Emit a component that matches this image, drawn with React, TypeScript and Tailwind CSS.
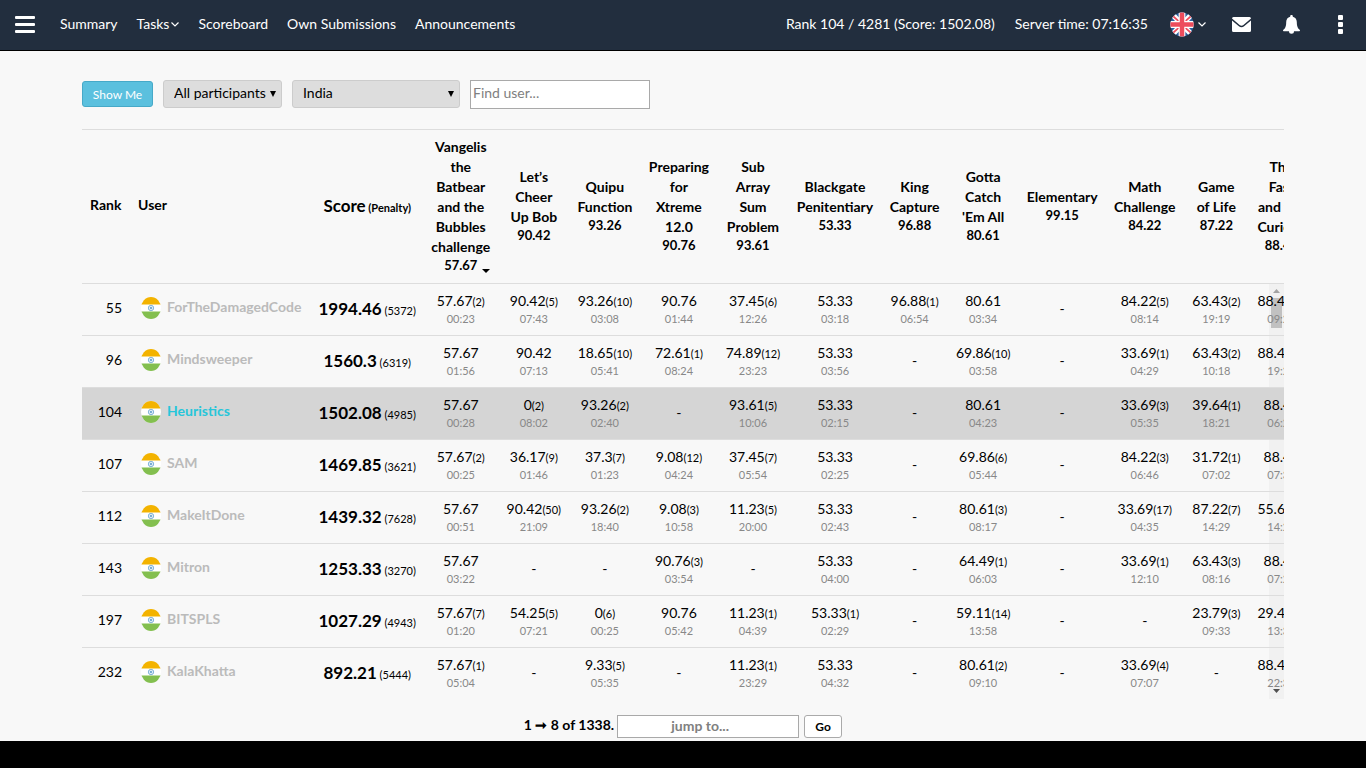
import { Fragment } from "react";

type Cell = [string, string?, string?] | null;
type Row = { rank: number; user: string; score: string; penalty: string; cells: Cell[]; me?: boolean };

const problems: { lines: string[]; best: string; width: string }[] = [
  { lines: ["Vangelis", "the", "Batbear", "and the", "Bubbles", "challenge"], best: "57.67", width: "w-[75px]" },
  { lines: ["Let’s", "Cheer", "Up Bob"], best: "90.42", width: "w-[71px]" },
  { lines: ["Quipu", "Function"], best: "93.26", width: "w-[71px]" },
  { lines: ["Preparing", "for", "Xtreme", "12.0"], best: "90.76", width: "w-[77px]" },
  { lines: ["Sub", "Array", "Sum", "Problem"], best: "93.61", width: "w-[71px]" },
  { lines: ["Blackgate", "Penitentiary"], best: "53.33", width: "w-[93px]" },
  { lines: ["King", "Capture"], best: "96.88", width: "w-[66px]" },
  { lines: ["Gotta", "Catch", "'Em All"], best: "80.61", width: "w-[71px]" },
  { lines: ["Elementary"], best: "99.15", width: "w-[87px]" },
  { lines: ["Math", "Challenge"], best: "84.22", width: "w-[78px]" },
  { lines: ["Game", "of Life"], best: "87.22", width: "w-[65px]" },
  { lines: ["The", "Fast", "and the", "Curious"], best: "88.42", width: "w-[65px]" },
];

const rows: Row[] = [
  { rank: 55, user: "ForTheDamagedCode", score: "1994.46", penalty: "5372", cells: [["57.67", "00:23", "2"], ["90.42", "07:43", "5"], ["93.26", "03:08", "10"], ["90.76", "01:44"], ["37.45", "12:26", "6"], ["53.33", "03:18"], ["96.88", "06:54", "1"], ["80.61", "03:34"], null, ["84.22", "08:14", "5"], ["63.43", "19:19", "2"], ["88.42", "09:24", "2"]] },
  { rank: 96, user: "Mindsweeper", score: "1560.3", penalty: "6319", cells: [["57.67", "01:56"], ["90.42", "07:13"], ["18.65", "05:41", "10"], ["72.61", "08:24", "1"], ["74.89", "23:23", "12"], ["53.33", "03:56"], null, ["69.86", "03:58", "10"], null, ["33.69", "04:29", "1"], ["63.43", "10:18", "2"], ["88.42", "19:24", "1"]] },
  { rank: 104, user: "Heuristics", score: "1502.08", penalty: "4985", me: true, cells: [["57.67", "00:28"], ["0", "08:02", "2"], ["93.26", "02:40", "2"], null, ["93.61", "10:06", "5"], ["53.33", "02:15"], null, ["80.61", "04:23"], null, ["33.69", "05:35", "3"], ["39.64", "18:21", "1"], ["88.42", "06:24"]] },
  { rank: 107, user: "SAM", score: "1469.85", penalty: "3621", cells: [["57.67", "00:25", "2"], ["36.17", "01:46", "9"], ["37.3", "01:23", "7"], ["9.08", "04:24", "12"], ["37.45", "05:54", "7"], ["53.33", "02:25"], null, ["69.86", "05:44", "6"], null, ["84.22", "06:46", "3"], ["31.72", "07:02", "1"], ["88.42", "07:34"]] },
  { rank: 112, user: "MakeItDone", score: "1439.32", penalty: "7628", cells: [["57.67", "00:51"], ["90.42", "21:09", "50"], ["93.26", "18:40", "2"], ["9.08", "10:58", "3"], ["11.23", "20:00", "5"], ["53.33", "02:43"], null, ["80.61", "08:17", "3"], null, ["33.69", "04:35", "17"], ["87.22", "14:29", "7"], ["55.65", "14:24", "3"]] },
  { rank: 143, user: "Mitron", score: "1253.33", penalty: "3270", cells: [["57.67", "03:22"], null, null, ["90.76", "03:54", "3"], null, ["53.33", "04:00"], null, ["64.49", "06:03", "1"], null, ["33.69", "12:10", "1"], ["63.43", "08:16", "3"], ["88.42", "07:24"]] },
  { rank: 197, user: "BITSPLS", score: "1027.29", penalty: "4943", cells: [["57.67", "01:20", "7"], ["54.25", "07:21", "5"], ["0", "00:25", "6"], ["90.76", "05:42"], ["11.23", "04:39", "1"], ["53.33", "02:29", "1"], null, ["59.11", "13:58", "14"], null, null, ["23.79", "09:33", "3"], ["29.47", "13:34", "2"]] },
  { rank: 232, user: "KalaKhatta", score: "892.21", penalty: "5444", cells: [["57.67", "05:04", "1"], null, ["9.33", "05:35", "5"], null, ["11.23", "23:29", "1"], ["53.33", "04:32"], null, ["80.61", "09:10", "2"], null, ["33.69", "07:07", "4"], null, ["88.42", "22:34", "2"]] },
];

function Chevron() {
  return (
    <svg className="h-2 w-2" viewBox="0 0 8 8" fill="none" stroke="currentColor" strokeWidth="1.2" aria-hidden="true">
      <path d="M.5 2.5 4 6l3.5-3.5" />
    </svg>
  );
}

function IndiaFlag() {
  return (
    <svg className="h-[22px] w-5 shrink-0" viewBox="0 0 20 22" preserveAspectRatio="none" aria-label="India" role="img">
      <defs>
        <clipPath id="in"><ellipse cx="10" cy="11" rx="10" ry="11" /></clipPath>
      </defs>
      <g clipPath="url(#in)">
        <rect width="20" height="22" fill="#fff" />
        <rect width="20" height="7.5" fill="#f3b300" />
        <rect y="14.5" width="20" height="8" fill="#83bf4f" />
      </g>
      <circle cx="10" cy="11" r="2.7" fill="#dcebf5" stroke="#6aa5d0" strokeWidth=".8" />
      <circle cx="10" cy="11" r=".9" fill="#4b8fc4" />
    </svg>
  );
}

function UkFlag() {
  return (
    <svg className="h-[25px] w-6" viewBox="0 0 64 64" preserveAspectRatio="none" aria-hidden="true">
      <defs>
        <clipPath id="uk"><circle cx="32" cy="32" r="31" /></clipPath>
      </defs>
      <g clipPath="url(#uk)">
        <rect width="64" height="64" fill="#2a5f9e" />
        <path d="M0 0l64 64M64 0 0 64" stroke="#fff" strokeWidth="14" />
        <path d="M4 7 28 28M60 7 36 28M4 57l24-21M60 57 36 36" stroke="#ed4c5c" strokeWidth="4.5" />
        <path d="M32 0v64M0 32h64" stroke="#fff" strokeWidth="18" />
        <path d="M32 0v64M0 32h64" stroke="#ed4c5c" strokeWidth="12" />
      </g>
    </svg>
  );
}

function TopBar() {
  return (
    <header className="flex h-[51px] items-center justify-between border-b border-black bg-[#222e3e] px-[15px] pb-[2px] text-sm text-white">
      <nav className="flex items-center gap-[19px]">
        <button aria-label="Menu" className="mr-[6px] flex w-5 flex-col gap-1">
          <span className="h-[3px] rounded-[1px] bg-white" />
          <span className="h-[3px] rounded-[1px] bg-white" />
          <span className="h-[3px] rounded-[1px] bg-white" />
        </button>
        <a href="#summary">Summary</a>
        <a href="#tasks" className="flex items-center gap-[2px]">Tasks<Chevron /></a>
        <a href="#scoreboard">Scoreboard</a>
        <a href="#own">Own Submissions</a>
        <a href="#announcements">Announcements</a>
      </nav>
      <div className="flex items-center">
        <span>Rank 104 / 4281 (Score: 1502.08)</span>
        <span className="ml-5">Server time: 07:16:35</span>
        <button aria-label="Language" className="ml-[22px] flex items-center gap-1"><UkFlag /><Chevron /></button>
        <button aria-label="Messages" className="ml-[26px]">
          <svg className="h-[15px] w-[19px]" viewBox="0 0 19 15" aria-hidden="true">
            <path fill="#fff" d="M1.5 0h16A1.5 1.5 0 0 1 19 1.5L11.4 8a3 3 0 0 1-3.8 0L0 1.5A1.5 1.5 0 0 1 1.5 0ZM0 3.4 6.6 9a4.5 4.5 0 0 0 5.8 0L19 3.4v10.1a1.5 1.5 0 0 1-1.5 1.5h-16A1.5 1.5 0 0 1 0 13.5Z" />
          </svg>
        </button>
        <button aria-label="Notifications" className="ml-8">
          <svg className="h-[19px] w-[17px]" viewBox="0 0 17 19" aria-hidden="true">
            <path fill="#fff" d="M8.5 0c.8 0 1.3.5 1.3 1.3v.4c2.5.6 4 2.600 4 5.300 0 4.500 1 6.300 3 8 .4.400.2 1.200-.5 1.200h-5.300a2.500 2.500 0 0 1-5 0H.7c-.7 0-.9-.8-.5-1.200 2-1.700 3-3.500 3-8 0-2.700 1.500-4.700 4-5.300v-.4C7.200.5 7.700 0 8.500 0Z" />
          </svg>
        </button>
        <button aria-label="More" className="ml-[38px] mr-2 flex flex-col gap-[2px]">
          <span className="size-[5px] rounded-[1px] bg-white" />
          <span className="size-[5px] rounded-[1px] bg-white" />
          <span className="size-[5px] rounded-[1px] bg-white" />
        </button>
      </div>
    </header>
  );
}

function Select({ label, value, width }: { label: string; value: string; width: string }) {
  return (
    <div className={`grid items-center ${width}`}>
      <select aria-label={label} className="col-start-1 row-start-1 h-7 appearance-none rounded-[3px] border border-[#ccc] bg-[#ddd] pb-[3px] pl-[10px] text-sm">
        <option>{value}</option>
      </select>
      <svg className="pointer-events-none col-start-1 row-start-1 mr-[6px] h-[6px] w-[6px] justify-self-end" viewBox="0 0 6 6" aria-hidden="true">
        <path d="M0 0h6L3 6Z" />
      </svg>
    </div>
  );
}

function Filters() {
  return (
    <form className="flex h-7 items-center gap-[10px]">
      <button type="button" className="h-[26px] w-[71px] rounded-[3px] border border-[#46a9c8] bg-[#5bc0de] pt-[2px] text-xs text-white">Show Me</button>
      <Select label="Participants" value="All participants" width="w-[119px]" />
      <Select label="Country" value="India" width="w-[168px]" />
      <input aria-label="Find user" placeholder="Find user..." className="h-[29px] w-[180px] border border-[#a9a9a9] bg-white px-[2px] pb-[3px] text-sm placeholder:text-[#808080]" />
    </form>
  );
}

function Standings() {
  return (
    <div className="relative isolate overflow-hidden">
      <div className="absolute top-[154px] right-0 bottom-0 -z-10 flex w-[15px] flex-col items-center bg-[#f1f1f1] py-[6px]">
        <svg className="h-1 w-[7px]" viewBox="0 0 7 4" aria-hidden="true"><path d="M3.5 0 7 4H0Z" fill="#a3a3a3" /></svg>
        <div className="mt-[5px] h-[30px] w-[11px] bg-[#c1c1c1]" />
        <svg className="mt-auto h-1 w-[7px]" viewBox="0 0 7 4" aria-hidden="true"><path d="M0 0h7L3.5 4Z" fill="#505050" /></svg>
      </div>
      <table className="w-[1232px] table-fixed border-separate border-spacing-0 text-sm leading-5">
        <colgroup>
          <col className="w-12" />
          <col className="w-[181px]" />
          <col className="w-28" />
          {problems.map((p, i) => <col key={i} className={p.width} />)}
        </colgroup>
        <thead>
          <tr className="*:border-t *:border-[#ddd]">
            <th className="px-2 pb-1 text-left">Rank</th>
            <th className="px-2 pb-1 text-left">User</th>
            <th className="text-center"><span className="text-[17px]">Score</span><span className="text-[11px]"> (Penalty)</span></th>
            {problems.map((p, i) => (
              <th key={i} className="pt-[7px] pb-2 text-center whitespace-nowrap">
                {p.lines.map((l, j) => <Fragment key={j}>{l}<br /></Fragment>)}
                <div className="relative h-[18px] text-[13px] leading-4">
                  {p.best}
                  {i === 0 && (
                    <svg className="absolute right-2 bottom-[2px] h-1 w-2" viewBox="0 0 8 4" aria-hidden="true"><path d="M0 0h8L4 4Z" /></svg>
                  )}
                </div>
              </th>
            ))}
          </tr>
        </thead>
        <tbody>
          {rows.map((r) => (
            <tr key={r.rank} className={`*:border-t *:border-[#ddd] ${r.me ? "bg-[#d5d5d5]" : ""}`}>
              <td className="px-2 pb-[3px] text-right">{r.rank}</td>
              <td className="px-2 pb-1">
                <div className="flex items-center gap-[6px] pl-[3px]">
                  <IndiaFlag />
                  <a href="#user" className={`pb-[2px] font-bold ${r.me ? "text-[#26c6da]" : "text-[#bbb]"}`}>{r.user}</a>
                </div>
              </td>
              <td className="text-center whitespace-nowrap">
                <span className="text-[17px] font-bold">{r.score}</span><span className="text-[11px]"> ({r.penalty})</span>
              </td>
              {r.cells.map((c, i) => (
                <td key={i} className="h-[52px] pt-[7px] pb-2 text-center whitespace-nowrap">
                  {c ? (
                    <>
                      <div className="h-5">{c[0]}{c[2] && <span className="text-[11px]">({c[2]})</span>}</div>
                      <div className="text-[11px] leading-4 text-[#888]">{c[1]}</div>
                    </>
                  ) : "-"}
                </td>
              ))}
            </tr>
          ))}
        </tbody>
      </table>
    </div>
  );
}

export default function App() {
  return (
    <div className="min-h-screen bg-black font-['Lato',sans-serif] text-black">
      <TopBar />
      <main className="bg-[#f8f8f8] px-[82px] pt-[29px] pb-[3px]">
        <Filters />
        <div className="mt-[21px]"><Standings /></div>
        <form className="mt-4 flex items-center justify-center text-sm font-bold">
          <label htmlFor="jump" className="pb-[3px]">1 ➞ 8 of 1338.</label>
          <input id="jump" placeholder="jump to..." className="ml-[3px] h-[23px] w-[182px] border border-[#a9a9a9] bg-white pb-[3px] pr-4 text-center placeholder:text-[#808080]" />
          <button type="button" className="ml-[5px] h-[23px] w-[38px] rounded-[3px] border border-[#aaa] bg-white text-xs">Go</button>
        </form>
      </main>
    </div>
  );
}
